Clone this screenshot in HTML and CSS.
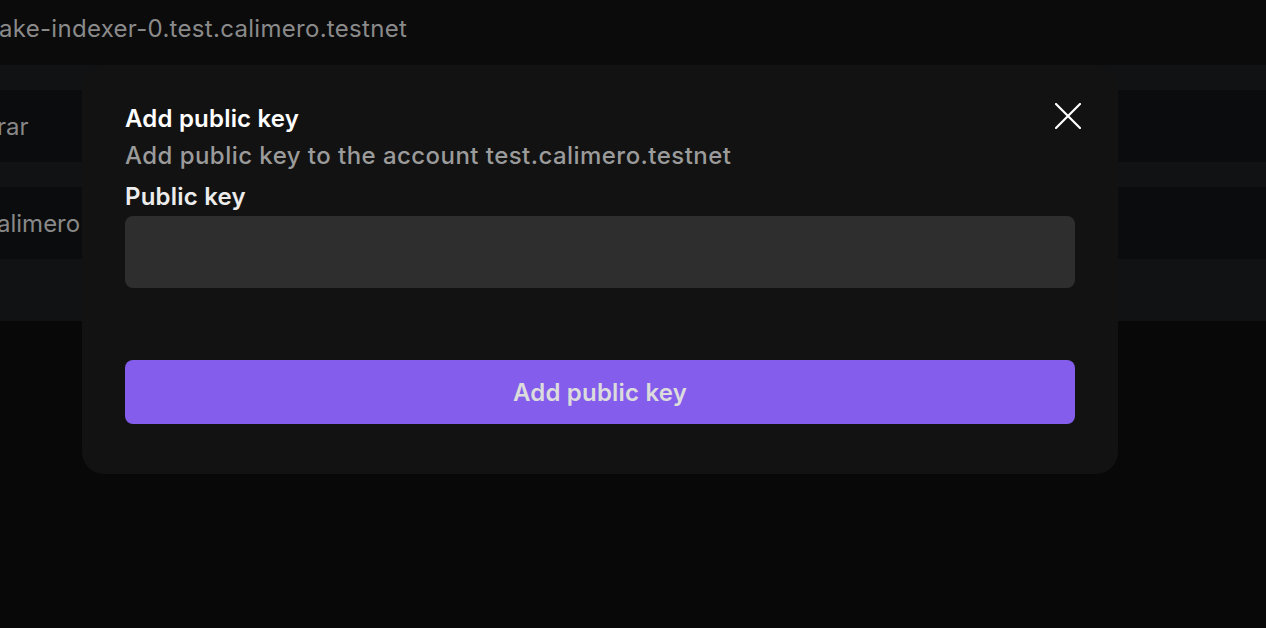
FILE: index.html
```html
<!DOCTYPE html>
<html>
<head>
<meta charset="utf-8">
<link rel="stylesheet" href="styles.css">
</head>
<body>
<div class="page">
  <div class="header">ake-indexer-0.test.calimero.testnet</div>
  <div class="table">
    <div class="gap"></div>
    <div class="row"><span class="cell">rar</span></div>
    <div class="gap"></div>
    <div class="row"><span class="cell">alimero</span></div>
    <div class="tail"></div>
  </div>
</div>

<div class="modal">
  <button class="close" aria-label="Close">
    <svg width="26" height="26" viewBox="0 0 26 26"><path d="M1 1 L25 25 M25 1 L1 25" stroke="#ffffff" stroke-width="2.2" stroke-linecap="round" fill="none"/></svg>
  </button>
  <div class="title">Add public key</div>
  <div class="subtitle">Add public key to the account test.calimero.testnet</div>
  <label class="label">Public key</label>
  <input class="input" type="text">
  <button class="submit">Add public key</button>
</div>
</body>
</html>
```

FILE: styles.css
```css
* { box-sizing: border-box; }
html, body {
  margin: 0;
  padding: 0;
  background: #080808;
  font-family: Inter, "Noto Sans", sans-serif;
  overflow: hidden;
}
.page {
  width: 1266px;
  height: 628px;
  background: #080808;
}
.header {
  height: 65px;
  background: #0b0b0c;
  color: #8a8a8a;
  font-size: 24px;
  letter-spacing: 0.3px;
  line-height: 57px;
  margin-left: -1px;
  white-space: nowrap;
}
.table {
  background: #111213;
  display: flex;
  flex-direction: column;
}
.gap { height: 25px; }
.row {
  height: 72px;
  background: #0b0c0d;
  display: flex;
  align-items: center;
  color: #888888;
  font-size: 24px;
}
.cell { margin-left: -3px; }
.tail { height: 62px; }

.modal {
  position: absolute;
  left: 82px;
  top: 65px;
  width: 1036px;
  height: 409px;
  background: #121212;
  border-radius: 22px;
  padding: 38px 43px 0 43px;
  display: flex;
  flex-direction: column;
}
.close {
  position: absolute;
  right: 37px;
  top: 38px;
  background: none;
  border: 0;
  padding: 0;
  width: 26px;
  height: 26px;
  cursor: pointer;
}
.close svg { display: block; }
.title {
  color: #ffffff;
  font-size: 24px;
  font-weight: 600;
  letter-spacing: 0.2px;
  line-height: 32px;
}
.subtitle {
  color: #9b9b9b;
  font-size: 24px;
  font-weight: 500;
  letter-spacing: 0.45px;
  line-height: 36px;
  margin-top: 3px;
}
.label {
  color: #ececec;
  font-size: 24px;
  font-weight: 600;
  letter-spacing: 0.2px;
  line-height: 32px;
  margin-top: 7px;
}
.input {
  margin-top: 3px;
  height: 72px;
  width: 100%;
  background: #2e2e2e;
  border: 0;
  border-radius: 8px;
  outline: none;
  color: #fff;
  font-size: 20px;
  padding: 0 16px;
}
.submit {
  margin-top: 72px;
  height: 64px;
  width: 100%;
  background: #845ded;
  border: 0;
  border-radius: 8px;
  color: #dcdcdc;
  font-family: Inter, "Noto Sans", sans-serif;
  font-size: 24px;
  font-weight: 600;
  letter-spacing: 0.2px;
}
```
